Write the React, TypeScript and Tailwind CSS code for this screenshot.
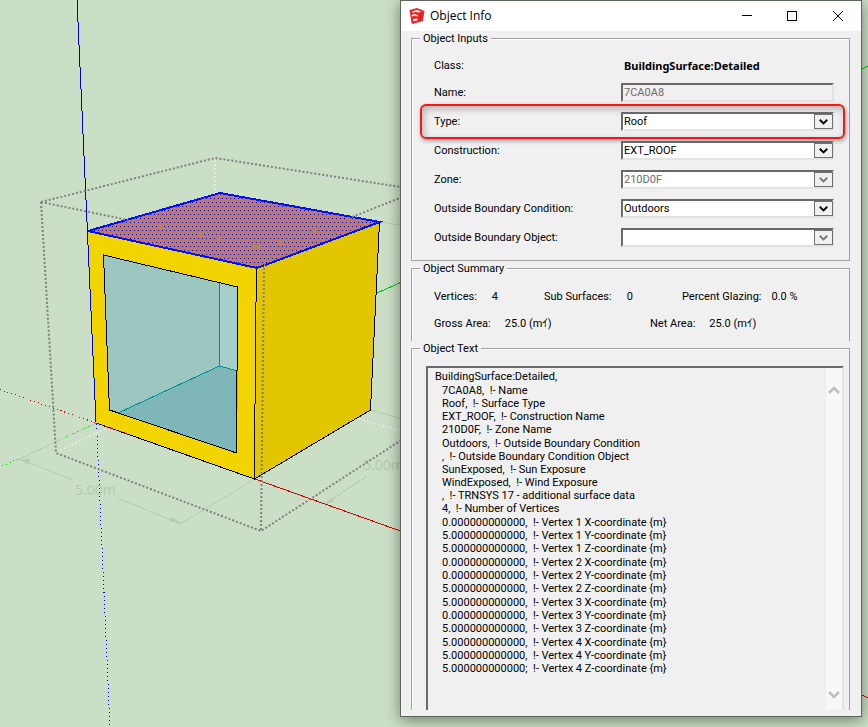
import React from 'react';

const selects = [
  { id: 'type', label: 'Type:', value: 'Roof', highlighted: true },
  { id: 'construction', label: 'Construction:', value: 'EXT_ROOF' },
  { id: 'zone', label: 'Zone:', value: '210D0F', disabled: true },
  { id: 'condition', label: 'Outside Boundary Condition:', value: 'Outdoors' },
  { id: 'object', label: 'Outside Boundary Object:', value: '', disabled: true },
];

const vertices = [
  ['0.000000000000', '5.000000000000', '5.000000000000'],
  ['0.000000000000', '0.000000000000', '5.000000000000'],
  ['5.000000000000', '0.000000000000', '5.000000000000'],
  ['5.000000000000', '5.000000000000', '5.000000000000'],
];

const objectText = [
  ['BuildingSurface:Detailed,'],
  ['7CA0A8,  !- Name', 'Roof,  !- Surface Type', 'EXT_ROOF,  !- Construction Name', '210D0F,  !- Zone Name'],
  [
    'Outdoors,  !- Outside Boundary Condition',
    ',  !- Outside Boundary Condition Object',
    'SunExposed,  !- Sun Exposure',
    'WindExposed,  !- Wind Exposure',
    ',  !- TRNSYS 17 - additional surface data',
    '4,  !- Number of Vertices',
  ],
  ...vertices.map((coords, v) =>
    coords.map((c, i) => `${c}${v === 3 && i === 2 ? ';' : ','}  !- Vertex ${v + 1} ${'XYZ'[i]}-coordinate {m}`)
  ),
];

const Chevron = ({ className, up = false }: { className: string; up?: boolean }) => (
  <svg viewBox="0 0 12 8" className={className} fill="none" stroke="currentColor" strokeWidth="2.5">
    <path d={up ? 'M1 7 L6 2 L11 7' : 'M1 1 L6 6 L11 1'} />
  </svg>
);

const Logo = () => (
  <svg viewBox="0 0 16 16" className="w-4 h-4">
    <path d="M0.500 2 L8 0 L15.500 3 L14 13 L4 16 L2.500 15 Z" fill="#e52b2f" />
    <path d="M3 3.500 L8 2 L12 3.500 L10 4.500 L7 3.800 L4 4.800 Z" fill="#fff" />
    <path d="M2.500 7 L6 6 L9 7.500 L9 8.500 L6 7.500 L3 8.500 Z" fill="#fff" />
    <path d="M4 11.500 L7 10.500 L9 11.500 L8 12.500 L4.500 13 Z" fill="#fff" />
    <path d="M12 5 L11 13" stroke="#b51b20" />
  </svg>
);

const Scene = () => (
  <svg
    viewBox="0 0 868 727"
    preserveAspectRatio="xMinYMin slice"
    className="absolute inset-0 w-full h-full"
    fill="none"
    shapeRendering="crispEdges"
  >
    <defs>
      <pattern id="dots" width="4" height="8" patternUnits="userSpaceOnUse">
        <rect width="4" height="8" fill="#bd7b5a" />
        <rect x="0" y="2" width="1" height="1" fill="#0000ff" />
        <rect x="2" y="6" width="1" height="1" fill="#0000ff" />
      </pattern>
    </defs>

    {/* dimensions */}
    <g stroke="#b9ccb5">
      <path d="M96 423 L15 461 M20 459 L73 480 M118 498 L180 524 L255 479" />
      <path d="M371 410 L420 424 M380 222 L420 228 M367 476 L325 504" />
      <path d="M20 459 L30 460 L28 464 Z M180 523 L170 521 L172 517 Z M325 504 L331 498 L334 501 Z" fill="#b9ccb5" />
    </g>
    <g fill="#b4c8b0" className="font-['Open_Sans',sans-serif] text-[14px]">
      <text x="75" y="495">5.00m</text>
      <text x="363" y="470">5.00m</text>
    </g>

    {/* axes behind the model */}
    <path d="M0 389.500 L96 423" stroke="#d80000" strokeDasharray="1 3" />
    <path d="M96 423 L66 437 M18 459 L0 467" stroke="#00d000" strokeDasharray="1 3" />
    <path d="M96.500 424 L110 727" stroke="#0000e0" strokeDasharray="1 3" />
    <path d="M377 293 L420 274 M860 70 L868 66" stroke="#00c800" />
    <path d="M255 479 L420 538 M860 694 L868 698" stroke="#d80000" />

    {/* hidden edges of the bounding box */}
    <path d="M215 160 V193 M57 452 L105 429 M359 419 L420 436" stroke="#e2e8e2" strokeWidth="2" strokeDasharray="2 2" />

    {/* model */}
    <path d="M88 230 L257 268 L255 479 L96 422 Z" fill="#f2d400" />
    <path d="M257 268 L380 222 L371 410 L255 479 Z" fill="#e2c600" />
    <path d="M103 255 L238 287 L237 453 L110 410 Z" fill="#9bc7c0" />
    <path d="M219 283 L238 287 L238 371 L219 366 Z" fill="#a3cfc8" />
    <path d="M219 366 L238 371 L237 453 L118 413 Z" fill="#7fb6b9" />
    <path d="M219.500 283 V366 L118 413 M219 366 L238 371" stroke="#009090" />
    <path d="M236.500 453 L109.500 410 L103.500 255 L237.500 287 V370 M236.500 370 V453" stroke="#000" />
    <path d="M256.500 268 V302 M255.500 302 V404 M254.500 404 V479" stroke="#000" />
    <path d="M96 423 L254.500 479 L370.500 410 L379.500 222" stroke="#000" />
    <path d="M96 423 L128 434" stroke="#d80000" strokeDasharray="2 3" />
    <path d="M77 0 L96 422" stroke="#0000d8" />
    <path d="M88 231 L220 193 L380 222 L257 268 Z" fill="url(#dots)" stroke="#0010ff" strokeWidth="2" />

    {/* bounding box */}
    <path
      d="M41 202 L215 158 L420 190 M41 202 L56 453 L261 531 L420 428 M41 202 L128 220 M352 217 L420 190 M264 268 L261 531"
      stroke="#808080"
      strokeWidth="2"
      strokeDasharray="2 2"
      shapeRendering="auto"
    />
    <path d="M128 220 L264 248 L352 217 M264 248 V268" stroke="#a48474" strokeDasharray="2 2" />
  </svg>
);

const Group = ({ title, className, legend = '-ml-[14px]', children }: { title: string; className: string; legend?: string; children: React.ReactNode }) => (
  <fieldset className={`min-w-0 border border-[#a0a0a0] shadow-[inset_1px_1px_0_#fff] ${className}`}>
    <legend className={`px-[3px] h-[14px] leading-4 bg-[#f0f0f0] ${legend}`}>{title}</legend>
    {children}
  </fieldset>
);

const Stat = ({ label, value, className = '' }: { label: string; value: string; className?: string }) => (
  <div className={`flex whitespace-pre ${className}`}>
    <dt>{label}</dt>
    <dd>{value}</dd>
  </div>
);

export default function App() {
  return (
    <main className="relative min-h-screen overflow-hidden bg-[#cbdfc6]">
      <Scene />
      <section className="absolute top-0 bottom-[10px] left-[400px] right-[6px] flex flex-col border border-[#5c665a] bg-[#f0f0f0] font-['Roboto','Noto_Sans_CJK_JP',sans-serif] text-[11px] leading-4 text-black shadow-[0_3px_14px_rgba(0,0,0,0.45)]">
        <header className="flex h-[30px] shrink-0 items-center bg-white pl-2">
          <Logo />
          <h1 className="ml-[5px] flex-1 font-['Open_Sans',sans-serif] text-[12px]">Object Info</h1>
          <button aria-label="Minimize" className="flex w-[46px] h-full items-center justify-center">
            <svg viewBox="0 0 11 11" className="w-[11px]" stroke="#000" shapeRendering="crispEdges"><path d="M1 4.500 H11" /></svg>
          </button>
          <button aria-label="Maximize" className="flex w-[46px] h-full items-center justify-center">
            <svg viewBox="0 0 11 11" className="w-[11px]" fill="none" stroke="#000" shapeRendering="crispEdges"><path d="M0.500 0.500 H9.500 V9.500 H0.500 Z" /></svg>
          </button>
          <button aria-label="Close" className="flex w-[46px] h-full items-center justify-center">
            <svg viewBox="0 0 11 11" className="w-[11px]" stroke="#000"><path d="M0 0 L10 10 M10 0 L0 10" /></svg>
          </button>
        </header>

        <div className="flex min-h-0 flex-1 flex-col pl-[10px] pr-[11px] pb-[6px]">
          <Group title="Object Inputs" className="pl-[22px] pr-[15px] pb-[13px] pt-[11px]">
            <div className="grid grid-cols-[187px_1fr] items-center h-[19px] mb-2">
              <span>Class:</span>
              <strong className="pl-[3px] font-['Noto_Sans',sans-serif]">BuildingSurface:Detailed</strong>
            </div>
            <div className="flex flex-col gap-[10px]">
              <div className="grid grid-cols-[187px_1fr] items-center h-[19px]">
                <label htmlFor="name">Name:</label>
                <input
                  id="name"
                  disabled
                  defaultValue="7CA0A8"
                  className="w-full h-[19px] pl-px border-2 border-t-[#696969] border-l-[#696969] border-b-[#e3e3e3] border-r-[#e3e3e3] text-[#6d6d6d]"
                />
              </div>
              {selects.map((s) => (
                <div key={s.id} className="relative grid grid-cols-[187px_1fr] items-center h-[19px]">
                  {s.highlighted && (
                    <div className="pointer-events-none absolute -top-[8px] -bottom-[8px] -left-[14px] -right-[11px] rounded-[6px] border-2 border-[#f01818] shadow-[1px_2px_4px_rgba(0,0,0,0.35),inset_2px_3px_7px_rgba(0,0,0,0.25)]" />
                  )}
                  <label htmlFor={s.id}>{s.label}</label>
                  <div className="relative">
                    <select
                      id={s.id}
                      disabled={s.disabled}
                      className="block w-full h-[19px] appearance-none pl-px border-2 border-t-[#696969] border-l-[#696969] border-b-[#e3e3e3] border-r-[#e3e3e3] bg-white leading-[15px] text-black disabled:text-[#6d6d6d] disabled:opacity-100"
                    >
                      <option>{s.value}</option>
                    </select>
                    <span
                      className={`pointer-events-none absolute right-px top-[2px] bottom-[2px] w-[19px] flex items-center justify-center border border-[#707070] bg-[#f0f0f0] ${s.disabled ? 'text-[#777]' : 'text-black'}`}
                    >
                      <Chevron className="w-[9px] h-[6px]" />
                    </span>
                  </div>
                </div>
              ))}
            </div>
          </Group>

          <Group title="Object Summary" className="border-b-0 pl-[22px] pr-4 pt-[14px] pb-[9px]">
            <dl className="flex">
              <Stat label="Vertices:" value="4" className="w-[110px] gap-[15px]" />
              <Stat label="Sub Surfaces:" value="0" className="w-[138px] gap-[15px]" />
              <Stat label="Percent Glazing:" value="0.0 %" className="gap-[10px]" />
            </dl>
            <dl className="flex mt-[11px]">
              <Stat label="Gross Area:" value="25.0 (mｲ)" className="w-[216px] gap-[14px]" />
              <Stat label="Net Area:" value="25.0 (mｲ)" className="gap-[14px]" />
            </dl>
          </Group>

          <Group title="Object Text" legend="-ml-[6px]" className="flex flex-1 flex-col border-b-0 pt-[11px] pl-[14px] pr-[5px]">
            <div className="flex h-full border-2 border-b-0 border-t-[#696969] border-l-[#696969] border-r-[#e3e3e3]">
              <div className="flex flex-1 flex-col gap-px pl-[7px] pt-[2px] leading-[13px]">
                {objectText.map((lines, i) => (
                  <pre key={i} className={`font-['Roboto',sans-serif] ${i > 0 ? 'pl-[7px]' : ''}`}>{lines.join('\n')}</pre>
                ))}
              </div>
              <div className="flex w-4 flex-col items-center justify-between bg-[#f8f8f8] text-[#bdbdbd]">
                <button aria-label="Scroll up" className="pt-[18px]"><Chevron up className="w-3 h-2" /></button>
                <button aria-label="Scroll down" className="pb-[11px]"><Chevron className="w-3 h-2" /></button>
              </div>
            </div>
          </Group>
        </div>
      </section>
    </main>
  );
}
